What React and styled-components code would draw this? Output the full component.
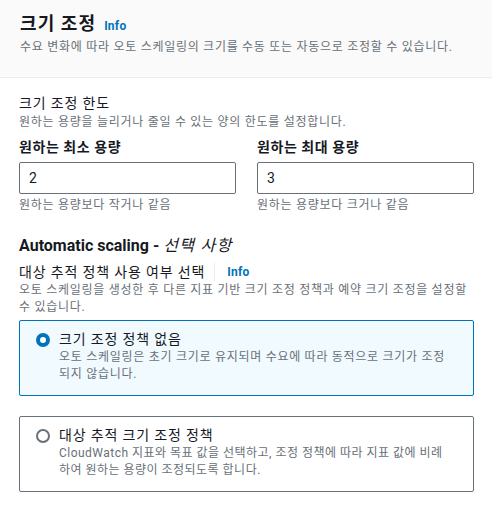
import React from "react";
import styled, { createGlobalStyle } from "styled-components";

const Global = createGlobalStyle`
  html, body {
    margin: 0;
    padding: 0;
    background: #ffffff;
  }
  body {
    font-family: Roboto, "Noto Sans CJK KR", sans-serif;
    color: #16191f;
    letter-spacing: 0.72px;
  }
`;

const Page = styled.div`
  width: 492px;
  min-height: 506px;
  background: #fff;
`;

const Header = styled.header`
  background: #fafafa;
  border-bottom: 1px solid #eaeded;
  padding: 11px 20px 21px;
`;

const Title = styled.h2`
  margin: 0;
  display: flex;
  align-items: baseline;
  gap: 8px;
  font-size: 18px;
  line-height: 26px;
  font-weight: 700;
  letter-spacing: 0.06em;
`;

const InfoLink = styled.a`
  color: #0073bb;
  font-size: 12px;
  font-weight: 700;
  letter-spacing: 0.02em;
  text-decoration: none;
`;

const Desc = styled.p`
  margin: 0;
  font-size: 12px;
  line-height: 17px;
  color: #687078;
  letter-spacing: 0.06em;
`;

const Body = styled.div`
  padding: 15px 18px 0 19px;
`;

const Section = styled.section`
  margin-bottom: ${(p) => p.$gap || 0}px;
`;

const SubTitle = styled.div`
  font-size: 14px;
  line-height: 20px;
  display: flex;
  align-items: center;
  letter-spacing: 0.06em;
  margin: ${(p) => p.$margin || "0 0 1px"};
`;

const Divider = styled.span`
  width: 1px;
  height: 18px;
  background: #eaeded;
  margin: 0 12px 0 9px;
`;

const Grid = styled.div`
  display: grid;
  grid-template-columns: 1fr 1fr;
  column-gap: 21px;
  margin-top: 5px;
`;

const Field = styled.div`
  display: flex;
  flex-direction: column;
`;

const Label = styled.label`
  font-size: 14px;
  line-height: 22px;
  font-weight: 700;
  letter-spacing: 0.04em;
  margin-bottom: 4px;
`;

const Input = styled.input`
  box-sizing: border-box;
  height: 32px;
  width: 100%;
  border: 1px solid #687078;
  border-radius: 2px;
  padding: 0 9px;
  font-family: Roboto, "Noto Sans CJK KR", sans-serif;
  font-size: 14px;
  color: #16191f;
  background: #fff;
  outline: none;
`;

const Hint = styled.div`
  font-size: 12px;
  line-height: 17px;
  color: #687078;
  letter-spacing: 0.06em;
  margin-top: 3px;
`;

const Heading = styled.h3`
  margin: 0;
  font-size: 16px;
  line-height: 22px;
  font-weight: 700;
  letter-spacing: 0;
  em {
    font-weight: 400;
    letter-spacing: 0.08em;
  }
`;

const Options = styled.div`
  display: flex;
  flex-direction: column;
  gap: 20px;
  margin-top: 4px;
`;

const Card = styled.label`
  display: flex;
  gap: 9px;
  box-sizing: border-box;
  min-height: 76px;
  padding: 8px 23px 11px 16px;
  border: 1px solid ${(p) => (p.$selected ? "#0073bb" : "#687078")};
  background: ${(p) => (p.$selected ? "#f1faff" : "#fff")};
  border-radius: 2px;
`;

const Radio = styled.span`
  flex: none;
  box-sizing: border-box;
  width: 14px;
  height: 14px;
  margin-top: 4px;
  border-radius: 50%;
  border: ${(p) => (p.$checked ? "4px solid #0073bb" : "2px solid #687078")};
  background: #fff;
`;

const CardText = styled.div`
  display: flex;
  flex-direction: column;
`;

const CardTitle = styled.div`
  font-size: 14px;
  line-height: 20px;
  letter-spacing: 0.06em;
`;

const CardDesc = styled.div`
  font-size: 12px;
  line-height: 17px;
  color: #687078;
  letter-spacing: ${(p) => (p.$tight ? "0.04em" : "0.06em")};
`;

export default function App() {
  return (
    <Page>
      <Global />
      <Header>
        <Title>
          크기 조정 <InfoLink>Info</InfoLink>
        </Title>
        <Desc>수요 변화에 따라 오토 스케일링의 크기를 수동 또는 자동으로 조정할 수 있습니다.</Desc>
      </Header>
      <Body>
        <Section $gap={21}>
          <SubTitle>크기 조정 한도</SubTitle>
          <Desc>원하는 용량을 늘리거나 줄일 수 있는 양의 한도를 설정합니다.</Desc>
          <Grid>
            <Field>
              <Label>원하는 최소 용량</Label>
              <Input defaultValue="2" />
              <Hint>원하는 용량보다 작거나 같음</Hint>
            </Field>
            <Field>
              <Label>원하는 최대 용량</Label>
              <Input defaultValue="3" />
              <Hint>원하는 용량보다 크거나 같음</Hint>
            </Field>
          </Grid>
        </Section>
        <Section>
          <Heading>
            Automatic scaling - <em>선택 사항</em>
          </Heading>
          <SubTitle $margin="5px 0 0">
            대상 추적 정책 사용 여부 선택
            <Divider />
            <InfoLink>Info</InfoLink>
          </SubTitle>
          <Desc>
            오토 스케일링을 생성한 후 다른 지표 기반 크기 조정 정책과 예약 크기 조정을 설정할 수 있습니다.
          </Desc>
          <Options>
            <Card $selected>
              <Radio $checked />
              <CardText>
                <CardTitle>크기 조정 정책 없음</CardTitle>
                <CardDesc>
                  오토 스케일링은 초기 크기로 유지되며 수요에 따라 동적으로 크기가 조정되지 않습니다.
                </CardDesc>
              </CardText>
            </Card>
            <Card>
              <Radio />
              <CardText>
                <CardTitle>대상 추적 크기 조정 정책</CardTitle>
                <CardDesc $tight>
                  CloudWatch 지표와 목표 값을 선택하고, 조정 정책에 따라 지표 값에 비례하여 원하는 용량이 조정되도록 합니다.
                </CardDesc>
              </CardText>
            </Card>
          </Options>
        </Section>
      </Body>
    </Page>
  );
}
